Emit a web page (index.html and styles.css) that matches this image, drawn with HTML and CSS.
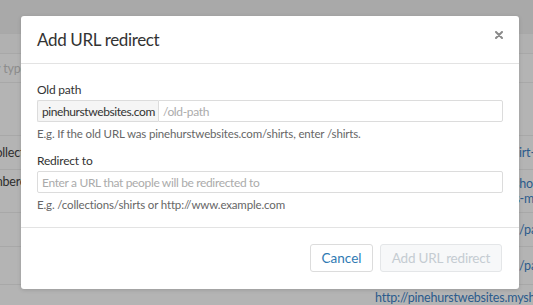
FILE: index.html
```html
<!DOCTYPE html>
<html>
<head>
<meta charset="utf-8">
<link rel="stylesheet" href="styles.css">
</head>
<body>
<div class="page">
  <div class="topbar"></div>
  <div class="row r1"></div>
  <div class="row r2"><span class="cell-l w-type"><span class="txt gray">Filter by type</span></span></div>
  <div class="row r3"></div>
  <div class="row r4"><span class="cell-l w-coll"><span class="txt">/collections</span></span><span class="cell-r c-shirt">/shirt-collections</span></div>
  <div class="row r5 top"><span class="cell-l w-num"><span class="txt">/numbered</span></span>
    <span class="cell-r two"><span class="ln l1">/shop</span><span class="ln l2">/shirts-mini</span></span></div>
  <div class="row r6"><span class="cell-r c-page">/pages</span></div>
  <div class="row r7"><span class="cell-r c-page">/pages</span></div>
  <div class="row r8"><span class="cell-link">http://pinehurstwebsites.myshopify.com</span></div>
</div>

<div class="modal">
  <div class="modal-header">
    <h2 class="modal-title">Add URL redirect</h2>
    <svg class="close" width="8" height="8" viewBox="0 0 8 8"><path d="M1 1L7 7M7 1L1 7" stroke="#8a8a8a" stroke-width="2" stroke-linecap="round"/></svg>
  </div>
  <div class="modal-body">
    <div class="field">
      <label class="label">Old path</label>
      <div class="input-group">
        <span class="prefix">pinehurstwebsites.com</span>
        <span class="input placeholder">/old-path</span>
      </div>
      <p class="help">E.g. If the old URL was pinehurstwebsites.com/shirts, enter /shirts.</p>
    </div>
    <div class="field second">
      <label class="label">Redirect to</label>
      <div class="input-group">
        <span class="input full placeholder">Enter a URL that people will be redirected to</span>
      </div>
      <p class="help">E.g. /collections/shirts or http://www.example.com</p>
    </div>
  </div>
  <div class="modal-footer">
    <button class="btn cancel">Cancel</button>
    <button class="btn primary-disabled">Add URL redirect</button>
  </div>
</div>
</body>
</html>
```

FILE: styles.css
```css
* { box-sizing: border-box; }
html, body { margin: 0; padding: 0; overflow: hidden; }
body {
  width: 533px;
  height: 305px;
  background: #b4b4b4;
  font-family: "Lato", "Open Sans", sans-serif;
  position: relative;
}
.page { display: flex; flex-direction: column; width: 533px; height: 305px; overflow: hidden; }
.topbar { height: 33px; background: #a9a9a9; flex: none; }
.row {
  position: relative;
  flex: none;
  border-top: 1px solid #a8a8a8;
  display: flex;
  align-items: center;
  font-size: 12.5px;
  color: #2e2e2e;
  white-space: nowrap;
  letter-spacing: -0.2px;
}
.row.top { align-items: flex-start; }
.r1 { height: 20px; background: #b1b1b1; }
.r2 { height: 29px; }
.r3 { height: 53px; }
.r4 { height: 34px; }
.r5 { height: 43px; }
.r6 { height: 34px; }
.r7 { height: 38px; }
.r8 { height: 21px; }
.cell-l { overflow: hidden; display: flex; justify-content: flex-end; flex: none; }
.txt { flex: none; }
.w-type { width: 27px; }
.w-coll { width: 46px; }
.w-num { width: 33px; margin-top: 4px; }
.gray { color: #8c8c8c; }
.cell-r {
  position: absolute;
  color: #2b5b8c;
  line-height: 15px;
}
.c-shirt { left: 502px; }
.c-page { left: 519px; }
.cell-r.two { left: 0; top: 6px; display: flex; flex-direction: column; }
.ln { display: block; }
.l1 { padding-left: 509px; }
.l2 { padding-left: 486px; }
.cell-link { margin-left: 375px; color: #2b5b8c; margin-top: 4px; }

.modal {
  position: absolute;
  left: 21px;
  top: 16px;
  width: 498px;
  height: 273px;
  background: #fff;
  border-radius: 3px;
  box-shadow: 0 1px 4px rgba(0,0,0,0.15);
  display: flex;
  flex-direction: column;
}
.modal-header {
  height: 48px;
  flex: none;
  border-bottom: 1px solid #e3e3e3;
  display: flex;
  align-items: center;
  justify-content: space-between;
  padding: 0 16px 0 16px;
}
.modal-title {
  margin: 0;
  font-weight: 400;
  font-size: 17px;
  letter-spacing: -0.35px;
  color: #333;
}
.close { margin-top: -10px; }
.modal-body {
  flex: none;
  padding: 18px 16px 0 16px;
  height: 164px;
  border-bottom: 1px solid #e3e3e3;
}
.field.second { margin-top: 11px; }
.label {
  display: block;
  font-size: 12px;
  letter-spacing: -0.2px;
  color: #333;
  line-height: 16px;
  margin-bottom: 2px;
}
.input-group {
  display: flex;
  height: 22px;
}
.prefix {
  display: flex;
  align-items: center;
  padding: 0 3px 0 4px;
  background: #f5f5f5;
  border: 1px solid #dcdcdc;
  border-right: none;
  font-size: 12px;
  letter-spacing: -0.4px;
  color: #333;
  border-radius: 2px 0 0 2px;
}
.input {
  flex: 1;
  display: flex;
  align-items: center;
  padding: 0 4px;
  border: 1px solid #dcdcdc;
  border-radius: 0 2px 2px 0;
  font-size: 12px;
  letter-spacing: -0.35px;
}
.input.full { border-radius: 2px; }
.placeholder { color: #ababab; }
.help {
  margin: 4px 0 0 0;
  font-size: 11.5px;
  letter-spacing: -0.15px;
  line-height: 16px;
  color: #666;
}
.modal-footer {
  flex: 1;
  display: flex;
  justify-content: flex-end;
  align-items: center;
  gap: 7px;
  padding: 0 17px 2px 0;
}
.btn {
  height: 28px;
  border-radius: 3px;
  font-family: inherit;
  font-size: 13.5px;
  padding: 0;
  background: #fff;
  border: 1px solid #dcdcdc;
  white-space: nowrap;
}
.cancel { color: #2f7ab3; width: 63px; }
.primary-disabled {
  width: 122px;
  background: #f7f8f9;
  border-color: #e4e6e8;
  color: #c5ccd2;
  letter-spacing: -0.2px;
}
```
